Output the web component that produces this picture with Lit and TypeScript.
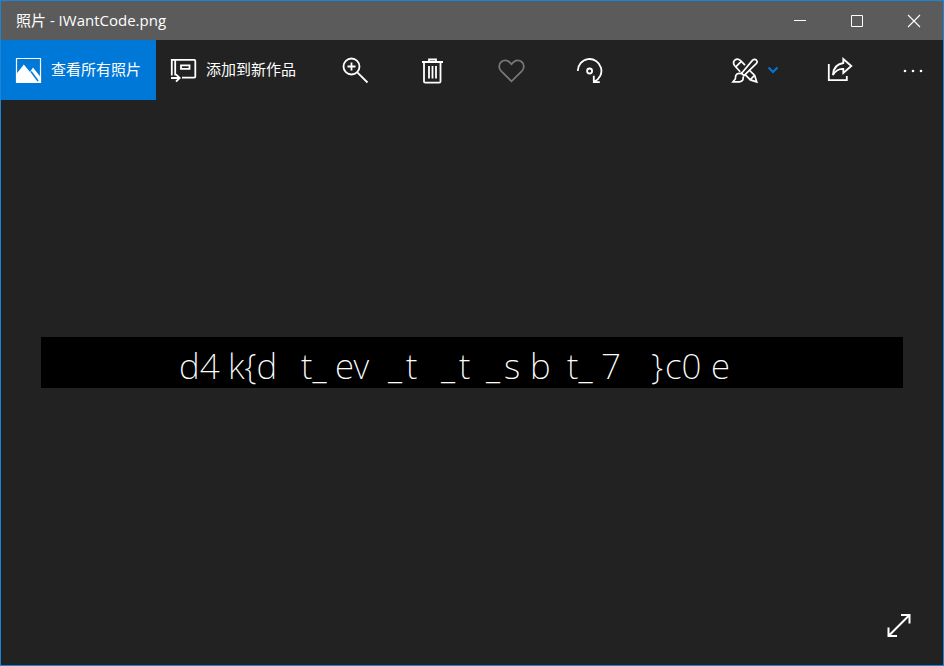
import { LitElement, html, css, svg } from "lit";
import { customElement, property } from "lit/decorators.js";
import { styleMap } from "lit/directives/style-map.js";

const glyphs: Record<string, unknown> = {
  minimize: svg`<path d="M8 13.5h12" stroke-width="1"/>`,
  maximize: svg`<path d="M8.500 8.500h11v11h-11z" stroke-width="1"/>`,
  close: svg`<path d="M8 8l12 12M20 8L8 20" stroke-width="1.100"/>`,
  photos: svg`<path d="M2.500 2.500h24v24h-24z" stroke-width="1.200"/><path d="M2 18.500L9.800 8.500 16 16l3-4.500L27 21.500V27H2z" fill="currentColor" stroke="none"/><path d="M17 15.500l7 9.500" stroke="#0078d7" stroke-width="1.500"/>`,
  album: svg`<path d="M2.800 19.500V3.900h3.400v15.600M6 3.900h19.300q1 0 1 1v15.700q0 1-1 1H13M12 9.300h8.500v3.600H12zM2 22h8M7 18.300l3.700 3.700L7 25.700"/>`,
  zoom: svg`<circle cx="10.500" cy="9.500" r="8"/><path d="M10.500 5.500v8M6.500 9.500h8M16.300 15.300L26.500 25.500"/>`,
  trash: svg`<path d="M3 5h21M10 5V2.500h7V5M5 5v19.500q0 1.200 1.200 1.200h14.100q1.200 0 1.200-1.200V5M10 9v12.500M13.500 9v12.500M17 9v12.500"/>`,
  heart: svg`<path d="M14.500 24.300L4.200 14.200C1.400 11.300 1.700 7.100 4.100 5 6.700 2.700 10.400 3 12.500 5.200L14.500 7.300 16.500 5.200C18.600 3 22.300 2.700 24.900 5c2.400 2.100 2.700 6.300-.1 9.200z"/>`,
  rotate: svg`<path d="M2.800 14A11.800 11.800 0 1 1 19.200 24.700M18.800 18.800V25.200h6"/><circle cx="14.600" cy="14" r="2.500"/>`,
  edit: svg`<path d="M9.200 15.800L3.700 9.700Q1.300 6.700 3.800 4.200 6.500 1.800 9.300 4.400L14 9.200M5 10.600l5-5M18 13.800l5.700 5.600 2 6.500-6.300-2-5.500-5.500M19.300 23.600l4.200-4.200M9.800 18.300L21.400 4.400Q23.400 2.400 25.300 4 27 5.700 25.200 7.600L12.500 20.200M9.700 16.300l3.600 3.600M9.600 17.600Q5.800 16.700 4.800 19.500L4.300 23 2 25.800h6.400Q13 25.300 12 20.500" stroke-width="1.700"/>`,
  chevron: svg`<path d="M9.500 11.500L14 16l4.500-4.500" stroke-width="2"/>`,
  share: svg`<path d="M2.800 8v16.200h18V20M17.300 3l8 7-8 7v-4.200Q10.500 12.500 6.900 19 7.400 8.500 17.300 7z"/>`,
  more: svg`<g fill="currentColor" stroke="none"><circle cx="7" cy="15" r="1.300"/><circle cx="15" cy="15" r="1.300"/><circle cx="23" cy="15" r="1.300"/></g>`,
  expand: svg`<path d="M4 24.500L24 4.500M16 4h8.500v8.500M3.500 16.500V25H12" stroke-width="2"/>`,
};

// Each run of characters in the picture, with the width it takes up to the next run.
const runs: [string, number][] = [
  ["d4", 49],
  ["k{d", 73],
  ["t_", 34],
  ["ev", 53],
  ["_", 18],
  ["t", 35],
  ["_", 18],
  ["t", 27],
  ["_", 18],
  ["s", 26],
  ["b", 37],
  ["t_", 34],
  ["7", 50],
  ["}", 14],
  ["c0", 46],
  ["e", 20],
];

@customElement("app-icon")
class AppIcon extends LitElement {
  @property() name = "";
  static styles = css`
    :host { display: block; flex: none; }
    svg { display: block; width: 28px; height: 28px; fill: none; stroke: currentColor; stroke-width: 1.8; }
  `;
  render() {
    return html`<svg viewBox="0 0 28 28" aria-hidden="true">${glyphs[this.name]}</svg>`;
  }
}

@customElement("app-root")
class AppRoot extends LitElement {
  static styles = css`
    :host {
      display: flex;
      flex-direction: column;
      box-sizing: border-box;
      min-height: 100vh;
      border: 1px solid #1f83d3;
      background: #222;
      color: #fff;
      font: 15px/20px "Open Sans", "Noto Sans CJK SC", sans-serif;
    }
    button {
      display: flex;
      align-items: center;
      justify-content: center;
      margin: 0;
      padding: 0;
      border: 0;
      background: none;
      color: inherit;
      font: inherit;
      white-space: nowrap;
    }
    .titlebar { display: flex; height: 39px; padding-right: 1px; background: #5b5b5b; }
    .title { flex: 1; margin: 0; padding-left: 15px; font: inherit; line-height: 39px; }
    .caption { width: 57px; }
    .toolbar { display: flex; height: 60px; }
    .labelled { justify-content: flex-start; gap: 9px; padding: 0 13px; }
    .labelled span { padding-bottom: 2px; }
    .primary { width: 155px; background: #0078d7; }
    .add { width: 160px; }
    .tool { width: 78px; padding-top: 2px; }
    .favorite { color: #777; }
    .spacer { flex: 1; }
    .edit { width: 83px; justify-content: flex-start; padding-left: 13px; }
    .chevron { color: #0078d7; }
    .share { width: 78px; }
    .more { width: 64px; padding-left: 2px; }
    .viewer { flex: 1; display: flex; flex-direction: column; padding: 0 40px; }
    .stage { flex: 1; display: flex; flex-direction: column; justify-content: center; }
    .photo {
      display: flex;
      margin: 0;
      padding: 6px 0 0 138px;
      background: #000;
      font: 200 35px/45px "Noto Sans", sans-serif;
      overflow: hidden;
    }
    .run { flex: none; }
    .footer { display: flex; justify-content: flex-end; height: 40px; }
    .fullscreen { position: absolute; right: 31px; bottom: 27px; }
  `;
  render() {
    return html`
      <header class="titlebar">
        <h1 class="title">照片 - IWantCode.png</h1>
        <button class="caption" aria-label="最小化"><app-icon name="minimize"></app-icon></button>
        <button class="caption" aria-label="最大化"><app-icon name="maximize"></app-icon></button>
        <button class="caption" aria-label="关闭"><app-icon name="close"></app-icon></button>
      </header>
      <nav class="toolbar">
        <button class="labelled primary"><app-icon name="photos"></app-icon><span>查看所有照片</span></button>
        <button class="labelled add"><app-icon name="album"></app-icon><span>添加到新作品</span></button>
        <button class="tool" aria-label="放大"><app-icon name="zoom"></app-icon></button>
        <button class="tool" aria-label="删除"><app-icon name="trash"></app-icon></button>
        <button class="tool favorite" aria-label="收藏"><app-icon name="heart"></app-icon></button>
        <button class="tool" aria-label="旋转"><app-icon name="rotate"></app-icon></button>
        <span class="spacer"></span>
        <button class="edit" aria-label="编辑"><app-icon name="edit"></app-icon><app-icon class="chevron" name="chevron"></app-icon></button>
        <button class="share" aria-label="共享"><app-icon name="share"></app-icon></button>
        <button class="more" aria-label="更多"><app-icon name="more"></app-icon></button>
      </nav>
      <main class="viewer">
        <div class="stage">
          <p class="photo">
            ${runs.map(([text, width]) => html`<span class="run" style=${styleMap({ width: `${width}px` })}>${text}</span>`)}
          </p>
        </div>
        <div class="footer"><button class="fullscreen" aria-label="全屏"><app-icon name="expand"></app-icon></button></div>
      </main>
    `;
  }
}
